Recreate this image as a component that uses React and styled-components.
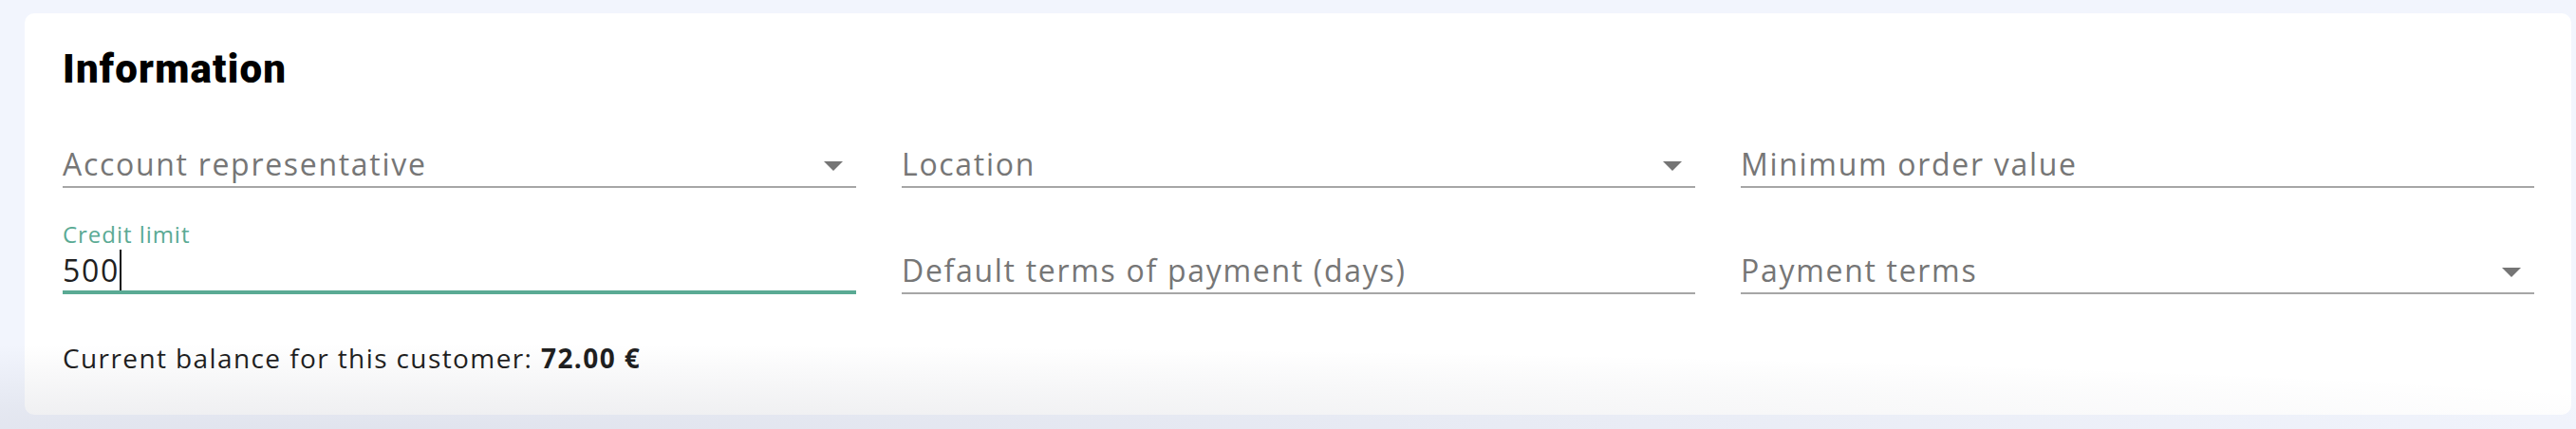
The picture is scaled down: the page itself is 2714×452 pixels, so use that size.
import React from "react";
import styled, { createGlobalStyle } from "styled-components";

const GlobalStyle = createGlobalStyle`
  html, body {
    margin: 0;
    padding: 0;
    background: #f2f5fd;
  }
  body {
    font-family: "Open Sans", "Liberation Sans", sans-serif;
  }
`;

const Page = styled.div`
  position: relative;
  box-sizing: border-box;
  height: 452px;
  padding: 14px 5px 15px 26px;
  overflow: hidden;

  &::after {
    content: "";
    position: absolute;
    left: 0;
    right: 0;
    bottom: 0;
    height: 90px;
    pointer-events: none;
    background: radial-gradient(
      ellipse 95% 100% at 15% 100%,
      rgba(20, 25, 55, 0.08) 0%,
      rgba(20, 25, 55, 0.06) 30%,
      rgba(20, 25, 55, 0) 100%
    );
  }
`;

const Card = styled.section`
  box-sizing: border-box;
  background: #ffffff;
  border-radius: 10px;
  padding: 38px 39px 46px 40px;
`;

const Title = styled.h2`
  margin: 0 0 8px;
  font-family: Roboto, "Liberation Sans", sans-serif;
  font-weight: 900;
  font-size: 42px;
  line-height: 42px;
  letter-spacing: 1.2px;
  color: #000;
`;

const FieldGrid = styled.div`
  display: grid;
  grid-template-columns: repeat(3, 1fr);
  column-gap: 48px;
  row-gap: 16px;
`;

const Field = styled.div`
  display: flex;
  flex-direction: column;
  justify-content: flex-end;
  height: 96px;
`;

const FloatLabel = styled.div`
  font-size: 24px;
  line-height: 24px;
  letter-spacing: 0.04em;
  margin-bottom: 3px;
  color: #5aaa94;
`;

const InputRow = styled.div`
  display: flex;
  align-items: flex-end;
  justify-content: space-between;
  min-height: 48px;
  box-shadow: inset 0 ${(p) => (p.$focused ? "-4px 0 #5aaa94" : "-2px 0 #a6a6a6")};
`;

const Text = styled.div`
  margin-bottom: 9px;
  font-size: 32px;
  line-height: 32px;
  letter-spacing: 0.053em;
  color: ${(p) => (p.$placeholder ? "#767676" : "#1f1f1f")};
  white-space: nowrap;
`;

const Caret = styled.span`
  border-right: 2px solid #111;
`;

const Arrow = styled.svg`
  flex: none;
  width: 48px;
  height: 48px;
  fill: #757575;
`;

const Balance = styled.p`
  margin: 53px 0 0;
  font-size: 28px;
  line-height: 28px;
  letter-spacing: 0.05em;
  color: #1f1f1f;

  strong {
    font-weight: 700;
  }
`;

const DropArrow = () => (
  <Arrow viewBox="0 0 24 24">
    <path d="M7 10l5 5 5-5z" />
  </Arrow>
);

const fields = [
  { label: "Account representative", select: true },
  { label: "Location", select: true },
  { label: "Minimum order value" },
  { label: "Credit limit", value: "500", focused: true },
  { label: "Default terms of payment (days)" },
  { label: "Payment terms", select: true },
];

const App = () => (
  <>
    <GlobalStyle />
    <Page>
      <Card>
        <Title>Information</Title>
        <FieldGrid>
          {fields.map((f) => (
            <Field key={f.label}>
              {f.value && <FloatLabel>{f.label}</FloatLabel>}
              <InputRow $focused={f.focused}>
                {f.value ? (
                  <Text>
                    <Caret>{f.value}</Caret>
                  </Text>
                ) : (
                  <Text $placeholder>{f.label}</Text>
                )}
                {f.select && <DropArrow />}
              </InputRow>
            </Field>
          ))}
        </FieldGrid>
        <Balance>
          Current balance for this customer: <strong>72.00 €</strong>
        </Balance>
      </Card>
    </Page>
  </>
);

export default App;
